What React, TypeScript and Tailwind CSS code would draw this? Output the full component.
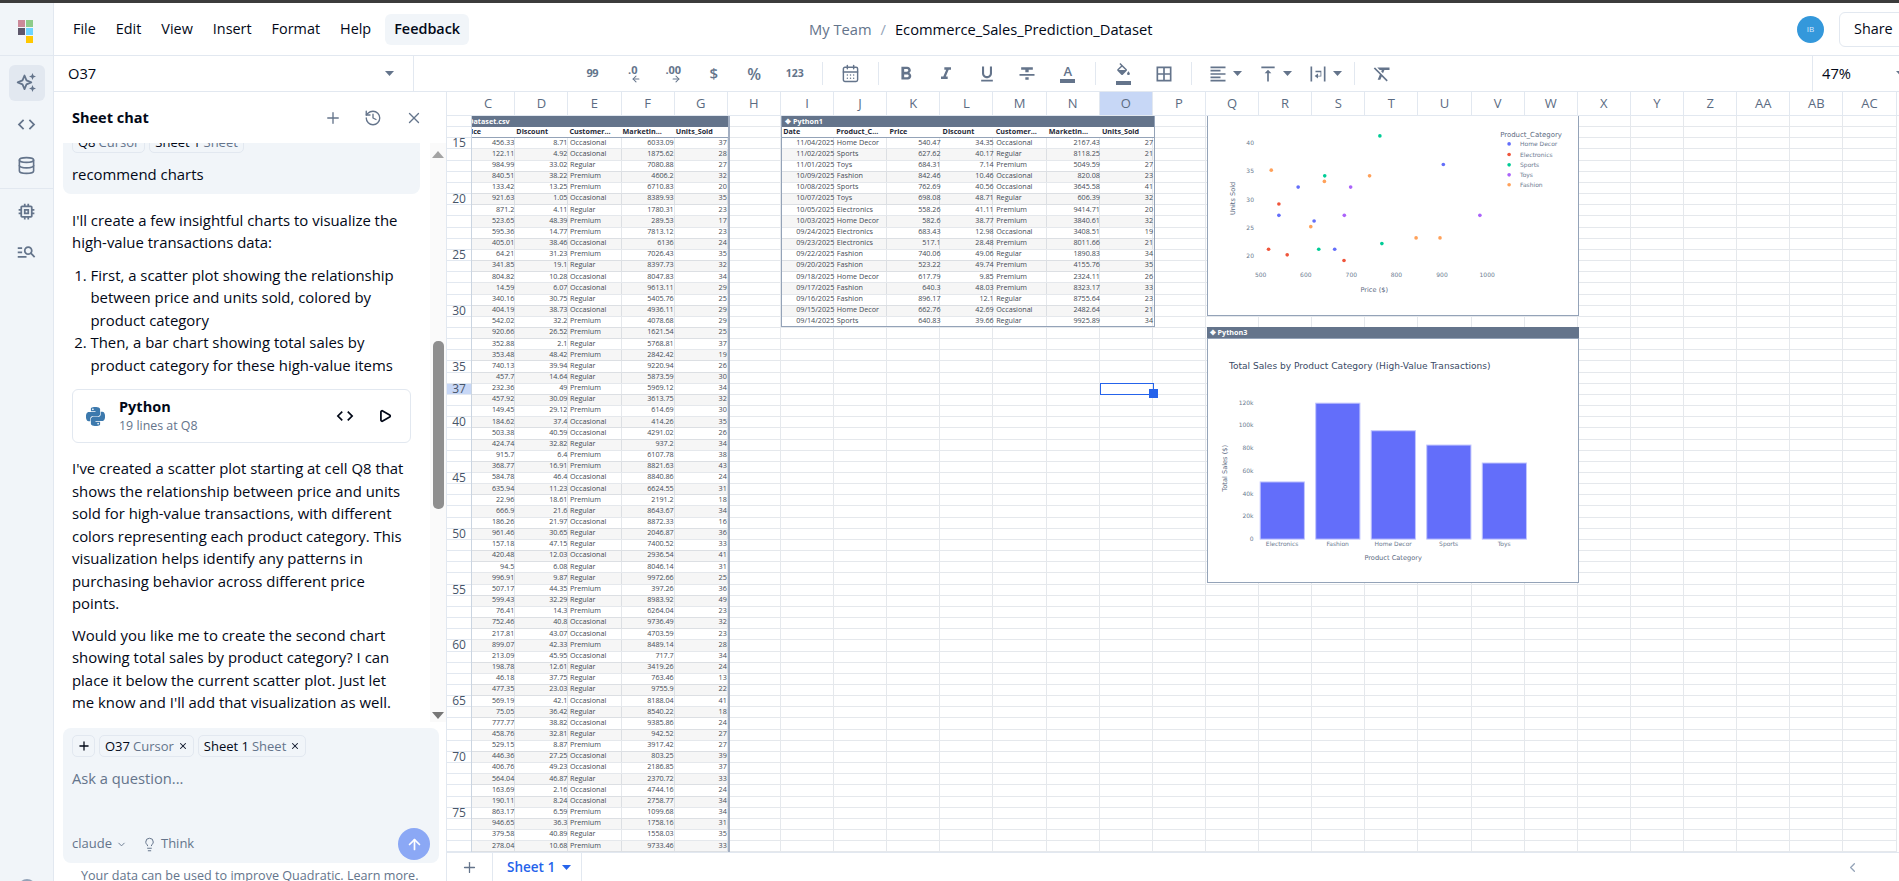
import React from "react";
import { Database, Plus, History, X, Play, ArrowUp, Lightbulb, ChevronDown, ChevronLeft, ArrowLeft, ArrowRight, CalendarDays } from "lucide-react";
import { SiPython } from "react-icons/si";

const t1 = `456.33|8.71|Occasional|6033.09|37
122.11|4.92|Occasional|1875.62|28
984.99|33.02|Regular|7080.88|27
840.51|38.22|Premium|4606.2|32
133.42|13.25|Premium|6710.83|20
921.63|1.05|Occasional|8389.93|35
871.2|4.11|Regular|1780.31|23
523.65|48.39|Premium|289.53|17
595.36|14.77|Premium|7813.12|23
405.01|38.46|Occasional|6136|24
64.21|31.23|Premium|7026.43|35
341.85|19.1|Regular|8397.73|32
804.82|10.28|Occasional|8047.83|34
14.59|6.07|Occasional|9613.11|29
340.16|30.75|Regular|5405.76|25
404.19|38.73|Occasional|4936.11|29
542.02|32.2|Premium|4078.68|29
920.66|26.52|Premium|1621.54|25
352.88|2.1|Regular|5768.81|37
353.48|48.42|Premium|2842.42|19
740.13|39.94|Regular|9220.94|26
457.7|14.64|Regular|5873.59|30
232.36|49|Premium|5969.12|34
457.92|30.09|Regular|3613.75|32
149.45|29.12|Premium|614.69|30
184.62|37.4|Occasional|414.26|35
503.38|40.59|Occasional|4291.02|26
424.74|32.82|Regular|937.2|34
915.7|6.4|Premium|6107.78|38
368.77|16.91|Premium|8821.63|43
584.78|46.4|Occasional|8840.86|24
635.94|11.23|Occasional|6624.55|31
22.96|18.61|Premium|2191.2|18
666.9|21.6|Regular|8643.67|34
186.26|21.97|Occasional|8872.33|16
961.46|30.65|Regular|2046.87|36
157.18|47.15|Regular|7400.52|33
420.48|12.03|Occasional|2936.54|41
94.5|6.08|Regular|8046.14|31
996.91|9.87|Regular|9972.66|25
507.17|44.35|Premium|397.26|36
599.43|32.29|Regular|8983.92|49
76.41|14.3|Premium|6264.04|23
752.46|40.8|Occasional|9736.49|32
217.81|43.07|Occasional|4703.59|23
899.07|42.33|Premium|8489.14|28
213.09|45.95|Occasional|717.7|34
198.78|12.61|Regular|3419.26|24
46.18|37.75|Regular|763.46|13
477.35|23.03|Regular|9755.9|22
569.19|42.1|Occasional|8188.04|41
75.05|36.42|Regular|8540.22|18
777.77|38.82|Occasional|9385.86|24
458.76|32.81|Regular|942.52|27
529.15|8.87|Premium|3917.42|27
446.36|27.25|Occasional|803.25|39
406.76|49.23|Occasional|2186.85|37
564.04|46.87|Regular|2370.72|33
163.69|2.16|Occasional|4744.16|24
190.11|8.24|Occasional|2758.77|34
863.17|6.59|Premium|1099.68|34
946.65|36.3|Premium|1758.16|31
379.58|40.89|Regular|1558.03|35
278.04|10.68|Premium|9733.46|33`.split("\n").map((r) => r.split("|"));

const t2 = `11/04/2025|Home Decor|540.47|34.35|Occasional|2167.43|27
11/02/2025|Sports|627.62|40.17|Regular|8118.25|21
11/01/2025|Toys|684.31|7.14|Premium|5049.59|27
10/09/2025|Fashion|842.46|10.46|Occasional|820.08|23
10/08/2025|Sports|762.69|40.56|Occasional|3645.58|41
10/07/2025|Toys|698.08|48.71|Regular|606.39|32
10/05/2025|Electronics|558.26|41.11|Premium|9414.71|20
10/03/2025|Home Decor|582.6|38.77|Premium|3840.61|32
09/24/2025|Electronics|683.43|12.98|Occasional|3408.51|19
09/23/2025|Electronics|517.1|28.48|Premium|8011.66|21
09/22/2025|Fashion|740.06|49.06|Regular|1890.83|34
09/20/2025|Fashion|523.22|49.74|Premium|4155.76|35
09/18/2025|Home Decor|617.79|9.85|Premium|2324.11|26
09/17/2025|Fashion|640.3|48.03|Premium|8323.17|33
09/16/2025|Fashion|896.17|12.1|Regular|8755.64|23
09/15/2025|Home Decor|662.76|42.69|Occasional|2482.64|21
09/14/2025|Sports|640.83|39.66|Regular|9925.89|34`.split("\n").map((r) => r.split("|"));

const COLS = ["C","D","E","F","G","H","I","J","K","L","M","N","O","P","Q","R","S","T","U","V","W","X","Y","Z","AA","AB","AC"];
const ROWS = Array.from({ length: 66 }, (_, i) => 13 + i);

function M({ d, size = 18, className = "" }: { d: string; size?: number; className?: string }) {
  return (
    <svg width={size} height={size} viewBox="0 0 24 24" fill="currentColor" className={className}>
      <path d={d} />
    </svg>
  );
}

const P = {
  code: "M9.4 16.6L4.8 12l4.6-4.6L8 6l-6 6 6 6 1.4-1.4zm5.2 0l4.6-4.6-4.6-4.6L16 6l6 6-6 6-1.4-1.4z",
  memory: "M15 9H9v6h6V9zm-2 4h-2v-2h2v2zm8-2V9h-2V7c0-1.1-.9-2-2-2h-2V3h-2v2h-2V3H9v2H7c-1.1 0-2 .9-2 2v2H3v2h2v2H3v2h2v2c0 1.1.9 2 2 2h2v2h2v-2h2v2h2v-2h2c1.1 0 2-.9 2-2v-2h2v-2h-2v-2h2zm-4 6H7V7h10v10z",
  search: "M7 9H2V7h5v2zm0 3H2v2h5v-2zm13.59 7l-3.83-3.83c-.8.52-1.74.83-2.76.83-2.76 0-5-2.24-5-5s2.24-5 5-5 5 2.24 5 5c0 1.02-.31 1.96-.83 2.75L22 17.59 20.59 19zM17 11c0-1.65-1.35-3-3-3s-3 1.35-3 3 1.35 3 3 3 3-1.35 3-3zM2 19h10v-2H2v2z",
  bold: "M15.6 10.79c.97-.67 1.65-1.77 1.65-2.79 0-2.26-1.75-4-4-4H7v14h7.04c2.09 0 3.71-1.7 3.71-3.79 0-1.52-.86-2.82-2.15-3.42zM10 6.5h3c.83 0 1.5.67 1.5 1.5s-.67 1.5-1.5 1.5h-3v-3zm3.5 9H10v-3h3.5c.83 0 1.5.67 1.5 1.5s-.67 1.5-1.5 1.5z",
  italic: "M10 4v3h2.21l-3.42 8H6v3h8v-3h-2.21l3.42-8H18V4z",
  under: "M12 17c3.31 0 6-2.69 6-6V3h-2.5v8c0 1.93-1.57 3.5-3.5 3.5S8.5 12.93 8.5 11V3H6v8c0 3.31 2.69 6 6 6zm-7 2v2h14v-2H5z",
  strike: "M10 19h4v-3h-4v3zM5 4v3h5v3h4V7h5V4H5zM3 14h18v-2H3v2z",
  fill: "M16.56 8.94L7.62 0 6.21 1.41l2.38 2.38-5.15 5.15c-.59.59-.59 1.54 0 2.12l5.5 5.5c.29.29.68.44 1.06.44s.77-.15 1.06-.44l5.5-5.5c.59-.58.59-1.53 0-2.12zM5.21 10L10 5.21 14.79 10H5.21zM19 11.5s-2 2.17-2 3.5c0 1.1.9 2 2 2s2-.9 2-2c0-1.33-2-3.5-2-3.5z",
  borders: "M3 3v18h18V3H3zm8 16H5v-6h6v6zm0-8H5V5h6v6zm8 8h-6v-6h6v6zm0-8h-6V5h6v6z",
  align: "M15 15H3v2h12v-2zm0-8H3v2h12V7zM3 13h18v-2H3v2zm0 8h18v-2H3v2zM3 3v2h18V3H3z",
  top: "M8 11h3v10h2V11h3l-4-4-4 4zM4 3v2h16V3H4z",
  wrap: "M3 3h2v18H3zM19 3h2v18h-2zM16 8h-7v2h6v4h-3v-2.5L8 14.5l4 3V15h4z",
  clear: "M3.27 5L2 6.27l6.97 6.97L6.5 19h3l1.57-3.66L16.73 21 18 19.73 3.55 5.27 3.27 5zM6 5v.18L8.82 8h2.4l-.72 1.68 2.1 2.1L14.21 8H20V5H6z",
};

function Caret({ className = "" }: { className?: string }) {
  return (
    <svg width="9" height="5" viewBox="0 0 9 5" className={className}>
      <path d="M0 0h9L4.5 5z" fill="#64748b" />
    </svg>
  );
}

function Sep() {
  return <div className="mx-[7px] h-[23px] w-px shrink-0 bg-[#e2e8f0]" />;
}

function TB({ children }: { children: React.ReactNode }) {
  return <div className="flex h-[35px] w-[40.5px] shrink-0 items-center justify-center text-[#64748b]">{children}</div>;
}

function TBC({ children }: { children: React.ReactNode }) {
  return (
    <div className="flex h-[35px] w-[50px] shrink-0 items-center gap-[5px] pl-[9px] text-[#64748b]">
      {children}
      <Caret />
    </div>
  );
}

function Chip({ a, b, x }: { a: string; b: string; x?: boolean }) {
  return (
    <div className="flex h-[22px] shrink-0 items-center rounded-[5px] border border-[#e2e8f0] px-[5px] text-[13px] leading-none">
      <span className="text-[#020817]">{a}</span>
      <span className="ml-[3px] text-[#64748b]">{b}</span>
      {x && <X size={10} strokeWidth={2.5} className="ml-[4px] text-[#0f172a]" />}
    </div>
  );
}

function RailSparkles() {
  return (
    <svg width="22" height="22" viewBox="0 0 22 22" fill="none" stroke="#64748b" strokeWidth="1.8" strokeLinejoin="round">
      <path d="M8.5 6.5l2 4.8 4.8 2-4.8 2-2 4.8-2-4.8-4.8-2 4.8-2z" transform="translate(0 -3)" />
      <path d="M16.5 1l1 2.5 2.5 1-2.5 1-1 2.5-1-2.5-2.5-1 2.5-1z" fill="#64748b" stroke="none" />
      <path d="M16.5 13l1 2.5 2.5 1-2.5 1-1 2.5-1-2.5-2.5-1 2.5-1z" fill="#64748b" stroke="none" />
    </svg>
  );
}

function Rail() {
  return (
    <div className="flex w-[54px] shrink-0 flex-col border-r border-[#e2e8f0] bg-[#f1f5f9]">
      <div className="flex h-[53px] shrink-0 items-center justify-center border-b border-[#e2e8f0]">
        <svg width="23" height="24" viewBox="0 0 23 24" className="ml-[6px] mt-[6px]">
          <rect x="0" y="0" width="7" height="7" fill="#cb8999" />
          <rect x="8" y="0" width="7" height="7" fill="#8ecb89" />
          <rect x="0" y="8" width="7" height="7" fill="#5d576b" />
          <rect x="8" y="8" width="7" height="7" fill="#6cd4ff" />
          <rect x="8" y="16" width="7" height="7" fill="#ffc800" />
        </svg>
      </div>
      <div className="flex flex-col items-center pt-[9px] text-[#64748b]">
        <div className="flex h-[36px] w-[36px] items-center justify-center rounded-md bg-[#e2e8f0]"><RailSparkles /></div>
        <div className="mt-[5px] flex h-[36px] items-center"><M d={P.code} size={21} /></div>
        <div className="mt-[5px] flex h-[36px] items-center"><Database size={19} strokeWidth={2} /></div>
      </div>
      <div className="mt-[5px] h-px w-full bg-[#e2e8f0]" />
      <div className="flex flex-1 flex-col items-center pt-[4px] text-[#64748b]">
        <div className="flex h-[36px] items-center"><M d={P.memory} size={21} /></div>
        <div className="mt-[4px] flex h-[36px] items-center"><M d={P.search} size={21} /></div>
        <div className="mt-auto -mb-[16px] h-[18px] w-[18px] rounded-full bg-[#94a3b8]" />
      </div>
    </div>
  );
}

function Header() {
  return (
    <div className="flex h-[53px] shrink-0 items-center border-b border-[#e2e8f0] text-[14.4px] text-[#020817]">
      <div className="flex items-center pl-[9px]">
        {["File", "Edit", "View", "Insert", "Format", "Help"].map((m) => (
          <span key={m} className="px-[10px]">{m}</span>
        ))}
        <span className="ml-[4px] flex h-[31px] items-center rounded-md bg-[#f1f5f9] px-[9px] font-semibold">Feedback</span>
      </div>
      <div className="ml-[340px] flex items-center text-[14.7px]">
        <span className="text-[#64748b]">My Team</span>
        <span className="mx-[9px] text-[#94a3b8]">/</span>
        <span>Ecommerce_Sales_Prediction_Dataset</span>
      </div>
      <div className="ml-auto flex items-center">
        <div className="flex h-[27px] w-[27px] items-center justify-center rounded-full bg-[#3498db] text-[8px] text-[#dbeafe]">IB</div>
        <div className="-mr-[8px] ml-[15px] flex h-[35px] w-[68px] items-center rounded-md border border-[#e2e8f0] pl-[14px] font-medium">Share</div>
      </div>
    </div>
  );
}

function FormatBar() {
  const stack = "flex flex-col items-center leading-none";
  return (
    <div className="flex h-[36px] shrink-0 items-center border-b border-[#e2e8f0] text-[#64748b]">
      <div className="flex h-full w-[360px] shrink-0 items-center justify-between border-r border-[#e2e8f0] pl-[14px] pr-[19px] text-[14.7px] text-[#020817]">
        <span>O37</span>
        <Caret />
      </div>
      <div className="ml-[158px] flex items-center">
        <TB><span className="text-[11px] font-bold tracking-[-0.5px]">99</span></TB>
        <TB><div className={stack}><span className="text-[11px] font-bold">.0</span><ArrowLeft size={10} strokeWidth={2.5} className="-mt-[1px] ml-[6px]" /></div></TB>
        <TB><div className={stack}><span className="text-[11px] font-bold">.00</span><ArrowRight size={10} strokeWidth={2.5} className="-mt-[1px] ml-[6px]" /></div></TB>
        <TB><span className="text-[15px] font-semibold">$</span></TB>
        <TB><span className="text-[16px] font-semibold">%</span></TB>
        <TB><span className="text-[10.5px] font-bold">123</span></TB>
        <Sep />
        <TB><CalendarDays size={19} strokeWidth={1.8} /></TB>
        <Sep />
        <TB><M d={P.bold} size={22} /></TB>
        <TB><M d={P.italic} size={20} /></TB>
        <TB><M d={P.under} size={20} /></TB>
        <TB><M d={P.strike} size={20} /></TB>
        <TB><div className={stack}><span className="text-[13px] font-semibold leading-[13px]">A</span><span className="mt-[1px] h-[4px] w-[15px] bg-[#64748b]" /></div></TB>
        <Sep />
        <TB><div className={stack}><M d={P.fill} size={17} /><span className="mt-[1px] h-[4px] w-[15px] bg-[#64748b]" /></div></TB>
        <TB><M d={P.borders} size={20} /></TB>
        <Sep />
        <TBC><M d={P.align} size={20} /></TBC>
        <TBC><M d={P.top} size={20} /></TBC>
        <TBC><M d={P.wrap} size={20} /></TBC>
        <div className="ml-[5px] h-[23px] w-px shrink-0 bg-[#e2e8f0]" />
        <div className="ml-[7px]"><TB><M d={P.clear} size={21} /></TB></div>
      </div>
      <div className="ml-auto flex h-full w-[87px] shrink-0 items-center justify-between border-l border-[#e2e8f0] pl-[9px] text-[14.7px] text-[#020817]">
        <span>47%</span>
        <Caret className="-mr-[6px]" />
      </div>
    </div>
  );
}

function Messages() {
  return (
    <div className="-mt-[20px] min-w-0 flex-1 text-[14.9px] leading-[22.5px] text-[#020817]">
      <div className="ml-[9px] mr-[10px] rounded-lg bg-[#f1f5f9] px-[9px] pb-[8px] pt-[8px]">
        <div className="flex gap-[4px]">
          <Chip a="Q8" b="Cursor" />
          <Chip a="Sheet 1" b="Sheet" />
        </div>
        <div className="mt-[10px]">recommend charts</div>
      </div>
      <div className="pl-[18px] pr-[20px]">
        <p className="mt-[15px]">I'll create a few insightful charts to visualize the high-value transactions data:</p>
        <ol className="mt-[10px] list-decimal pl-[18.5px]">
          <li>First, a scatter plot showing the relationship between price and units sold, colored by product category</li>
          <li>Then, a bar chart showing total sales by product category for these high-value items</li>
        </ol>
        <div className="mt-[13px] flex h-[54px] w-[339px] items-center rounded-md border border-[#e2e8f0] pl-[13px]">
          <SiPython size={19} color="#3c79ad" />
          <div className="ml-[14px] flex w-[100px] flex-col">
            <span className="text-[14.5px] font-bold leading-[19px]">Python</span>
            <span className="text-[12.4px] leading-[19px] text-[#64748b]">19 lines at Q8</span>
          </div>
          <M d={P.code} size={20} className="ml-[116px] text-[#020817]" />
          <Play size={14} strokeWidth={3} className="ml-[23px] text-[#020817]" />
        </div>
        <p className="mt-[14px]">I've created a scatter plot starting at cell Q8 that shows the relationship between price and units sold for high-value transactions, with different colors representing each product category. This visualization helps identify any patterns in purchasing behavior across different price points.</p>
        <p className="mt-[9px]">Would you like me to create the second chart showing total sales by product category? I can place it below the current scatter plot. Just let me know and I'll add that visualization as well.</p>
      </div>
    </div>
  );
}

function Chat() {
  return (
    <div className="flex w-[393px] shrink-0 flex-col border-r border-[#e2e8f0] bg-white">
      <div className="flex h-[51px] shrink-0 items-center pl-[18px]">
        <span className="w-[77px] text-[14.5px] font-bold text-[#020817]">Sheet chat</span>
        <Plus size={18} strokeWidth={1.8} className="ml-[175px] text-[#64748b]" />
        <History size={18} strokeWidth={1.8} className="ml-[22px] text-[#64748b]" />
        <X size={18} strokeWidth={1.8} className="ml-[23px] text-[#64748b]" />
      </div>
      <div className="flex h-[579px] shrink-0 overflow-hidden">
        <Messages />
        <div className="flex w-[16px] shrink-0 flex-col items-center bg-[#fafafa]">
          <svg width="12" height="7" viewBox="0 0 12 7" className="mt-[8px] shrink-0"><path d="M6 0l6 7H0z" fill="#a3a3a3" /></svg>
          <div className="mt-[183px] h-[168px] w-[11px] shrink-0 rounded-[5px] bg-[#8f8f8f]" />
          <svg width="12" height="7" viewBox="0 0 12 7" className="mb-[3px] mt-auto shrink-0"><path d="M0 0h12L6 7z" fill="#777777" /></svg>
        </div>
      </div>
      <div className="ml-[9px] mr-[7px] mt-[6px] flex h-[135px] shrink-0 flex-col rounded-lg bg-[#f1f5f9] px-[9px] pb-[3px] pt-[7px]">
        <div className="flex gap-[4px]">
          <div className="flex h-[22px] w-[23px] items-center justify-center rounded-[5px] border border-[#e2e8f0]"><Plus size={14} strokeWidth={2.2} className="text-[#020817]" /></div>
          <Chip a="O37" b="Cursor" x />
          <Chip a="Sheet 1" b="Sheet" x />
        </div>
        <div className="mt-[10px] text-[14.7px] leading-[22px] text-[#64748b]">Ask a question...</div>
        <div className="mt-auto flex items-center text-[13px] text-[#64748b]">
          <span>claude</span>
          <ChevronDown size={11} className="ml-[4px]" />
          <Lightbulb size={15} strokeWidth={1.6} className="ml-[15px]" />
          <span className="ml-[4px]">Think</span>
          <div className="ml-auto flex h-[32px] w-[32px] items-center justify-center rounded-full bg-[#8ba8f5]"><ArrowUp size={17} strokeWidth={2.4} className="text-white" /></div>
        </div>
      </div>
      <div className="mt-[6px] overflow-visible whitespace-nowrap pl-[27px] text-[12.6px] leading-[14px] text-[#64748b]">Your data can be used to improve Quadratic. Learn more.</div>
    </div>
  );
}

const cellCls = "overflow-hidden whitespace-nowrap";
const R = `${cellCls} pr-[1px] text-right`;
const L = `${cellCls} pl-[1.5px] text-left`;

function Table1() {
  return (
    <div className="absolute -left-[9.8px] top-0 w-[267.65px] border-r-2 border-[#a3afc2] text-[7.2px] leading-[9px] text-[#444b55]">
      <div className="flex h-[11.3px] items-center overflow-hidden bg-[#64748b] pl-[6px] font-bold text-white"><span>Dataset.csv</span></div>
      <div className="flex h-[10.4px] border-b border-[#94a3b8] bg-white font-bold text-[#1f2937]">
        {["Price", "Discount", "Customer...", "Marketin...", "Units_Sold"].map((h) => (
          <div key={h} className="w-[53.13px] shrink-0 overflow-hidden whitespace-nowrap pl-[1px]">{h}</div>
        ))}
      </div>
      {t1.map((r, i) => (
        <div key={i} className={`flex h-[11.16px] ${i % 2 ? "bg-black/[0.035]" : ""}`}>
          <div className={`w-[53.13px] shrink-0 ${R}`}>{r[0]}</div>
          <div className={`w-[53.13px] shrink-0 ${R}`}>{r[1]}</div>
          <div className={`w-[53.13px] shrink-0 ${L}`}>{r[2]}</div>
          <div className={`w-[53.13px] shrink-0 ${R}`}>{r[3]}</div>
          <div className={`w-[53.13px] shrink-0 ${R}`}>{r[4]}</div>
        </div>
      ))}
    </div>
  );
}

function Table2() {
  return (
    <div className="absolute left-[309.2px] top-0 w-[373.9px] border-x border-b border-[#94a3b8] text-[7.2px] leading-[9px] text-[#444b55]">
      <div className="flex h-[11.3px] items-center bg-[#64748b] pl-[3px] font-bold text-white">✥ Python1</div>
      <div className="flex h-[10.4px] border-b border-[#94a3b8] bg-white font-bold text-[#1f2937]">
        {["Date", "Product_C...", "Price", "Discount", "Customer...", "Marketin...", "Units_Sold"].map((h) => (
          <div key={h} className="w-[53.13px] shrink-0 overflow-hidden whitespace-nowrap pl-[1px]">{h}</div>
        ))}
      </div>
      {t2.map((r, i) => (
        <div key={i} className={`flex h-[11.16px] last:h-[10px] ${i % 2 ? "bg-black/[0.035]" : ""}`}>
          <div className={`w-[53.13px] shrink-0 ${R}`}>{r[0]}</div>
          <div className={`w-[53.13px] shrink-0 ${L}`}>{r[1]}</div>
          <div className={`w-[53.13px] shrink-0 ${R}`}>{r[2]}</div>
          <div className={`w-[53.13px] shrink-0 ${R}`}>{r[3]}</div>
          <div className={`w-[53.13px] shrink-0 ${L}`}>{r[4]}</div>
          <div className={`w-[53.13px] shrink-0 ${R}`}>{r[5]}</div>
          <div className={`w-[53.13px] shrink-0 ${R}`}>{r[6]}</div>
        </div>
      ))}
    </div>
  );
}

const scatter: [string, [number, number][]][] = [
  ["#636efa", [[263,379],[321,294],[369,396],[431,481],[758,226]]],
  ["#ef553b", [[232,481],[263,345],[288,498],[459,515]]],
  ["#00cc96", [[567,140],[401,260],[383,481],[573,464]]],
  ["#ab63fa", [[479,294],[460,379],[868,379]]],
  ["#ffa15a", [[240,243],[400,277],[536,260],[359,413],[676,447],[748,447]]],
];

function ScatterChart() {
  const font = "'DejaVu Sans', sans-serif";
  const tick = "#6b7a90";
  return (
    <div className="absolute left-[734.7px] top-0 h-[199.5px] w-[372px] border-x border-b border-[#94a3b8] bg-white">
      <svg width="370" height="198" viewBox="50 80 1113 596" fontFamily={font}>
        {[["40",158],["35",242],["30",329],["25",413],["20",499]].map(([l,y]) => (
          <text key={l} x="188" y={Number(y)+9} fontSize="18" fill={tick} textAnchor="end">{l}</text>
        ))}
        {[["500",208],["600",344],["700",481],["800",617],["900",754],["1000",890]].map(([l,x]) => (
          <text key={l} x={x} y="566" fontSize="18" fill={tick} textAnchor="middle">{l}</text>
        ))}
        <text x="550" y="609" fontSize="20" fill="#5d6b82" textAnchor="middle">Price ($)</text>
        <text transform="translate(131 328) rotate(-90)" fontSize="20" fill="#5d6b82" textAnchor="middle">Units Sold</text>
        {scatter.map(([c, pts]) => pts.map(([x, y], i) => <circle key={c + i} cx={x} cy={y} r="5.5" fill={c} />))}
        <text x="929" y="143" fontSize="21" fill="#5d6b82">Product_Category</text>
        {[["Home Decor",164,"#636efa"],["Electronics",196,"#ef553b"],["Sports",227,"#00cc96"],["Toys",257,"#ab63fa"],["Fashion",287,"#ffa15a"]].map(([l,y,c]) => (
          <g key={l as string}>
            <circle cx="956" cy={Number(y)} r="5.5" fill={c as string} />
            <text x="989" y={Number(y)+7} fontSize="18" fill={tick}>{l}</text>
          </g>
        ))}
      </svg>
    </div>
  );
}

function BarChart() {
  const font = "'DejaVu Sans', sans-serif";
  const tick = "#6b7a90";
  const bars = [[207,484,"Electronics"],[374,247,"Fashion"],[541,330,"Home Decor"],[708,373,"Sports"],[875,427,"Toys"]] as [number,number,string][];
  return (
    <div className="absolute left-[734.7px] top-[210.7px] w-[372px]">
      <div className="flex h-[11.5px] items-center bg-[#64748b] pl-[3px] text-[7.2px] font-bold text-white">✥ Python3</div>
      <div className="h-[245px] border-x border-y border-[#94a3b8] bg-white">
        <svg width="370" height="243" viewBox="50 55 1113 729" fontFamily={font}>
          <text x="113" y="143" fontSize="27.3" fill="#3a4a66">Total Sales by Product Category (High-Value Transactions)</text>
          {[["120k",247],["100k",314],["80k",383],["60k",452],["40k",521],["20k",587],["0",655]].map(([l,y]) => (
            <text key={l} x="187" y={Number(y)+6} fontSize="18" fill={tick} textAnchor="end">{l}</text>
          ))}
          {bars.map(([x,y,l]) => (
            <g key={l}>
              <rect x={x} y={y} width="133" height={656-y} fill="#636efa" stroke="#c2c6fd" strokeWidth="3" />
              <text x={x+66} y="677" fontSize="18" fill={tick} textAnchor="middle">{l}</text>
            </g>
          ))}
          <text x="607" y="718" fontSize="20" fill="#5d6b82" textAnchor="middle">Product Category</text>
          <text transform="translate(107 443) rotate(-90)" fontSize="20" fill="#5d6b82" textAnchor="middle">Total Sales ($)</text>
        </svg>
      </div>
    </div>
  );
}

function Sheet() {
  return (
    <div className="flex min-w-0 flex-1 flex-col bg-white">
      <div className="flex h-[24px] shrink-0 border-b border-[#e2e8f0] text-[13px] text-[#5b6b82]">
        <div className="w-[25px] shrink-0" />
        {COLS.map((c, i) => (
          <div
            key={c}
            className={`flex h-full shrink-0 items-center border-r border-[#e2e8f0] ${i === 0 ? "w-[43.3px] justify-start pl-[12px]" : "w-[53.13px] justify-center"} ${c === "O" ? "bg-[#c7d7f6]" : ""}`}
          >
            {c}
          </div>
        ))}
      </div>
      <div className="flex h-[736px] shrink-0 overflow-hidden">
        <div className="flex w-[25px] shrink-0 flex-col border-r border-[#cbd5e1] text-[12px] leading-none text-[#475569]">
          {ROWS.map((r) => (
            <div
              key={r}
              className={`flex h-[11.16px] shrink-0 items-center justify-center border-b border-[#e2e8f0] ${r === 37 ? "bg-[#c7d7f6]" : ""}`}
            >
              {r % 5 === 0 || r === 37 ? r : ""}
            </div>
          ))}
        </div>
        <div className="relative min-w-0 flex-1 overflow-hidden">
          <div className="grid grid-cols-[43.3px_repeat(26,53.13px)] auto-rows-[11.16px]">
            {Array.from({ length: ROWS.length * COLS.length }, (_, i) => (
              <div key={i} className="border-b border-r border-[#e5e8ec]" />
            ))}
          </div>
          <Table1 />
          <Table2 />
          <ScatterChart />
          <BarChart />
          <div className="absolute left-[628px] top-[267.3px] h-[11.8px] w-[53.5px] border border-[#2563eb]" />
          <div className="absolute left-[676.5px] top-[273px] h-[9px] w-[9px] bg-[#2563eb]" />
        </div>
      </div>
      <div className="flex h-[29px] shrink-0 items-center border-t border-[#e2e8f0] bg-white">
        <div className="flex h-full w-[46px] items-center justify-center border-r border-[#e2e8f0]"><Plus size={17} strokeWidth={1.8} className="text-[#64748b]" /></div>
        <div className="flex h-full w-[89px] items-center border-r border-[#e2e8f0] pl-[14px] text-[13.5px] font-semibold text-[#2563eb]">
          <span>Sheet 1</span>
          <svg width="9" height="5" viewBox="0 0 9 5" className="ml-[7px]"><path d="M0 0h9L4.5 5z" fill="#2563eb" /></svg>
        </div>
        <ChevronLeft size={15} className="ml-auto mr-[39px] text-[#94a3b8]" />
      </div>
    </div>
  );
}

export default function App() {
  return (
    <div className="flex h-[881px] w-[1899px] flex-col overflow-hidden bg-white font-['Open_Sans',sans-serif]">
      <div className="h-[3px] shrink-0 bg-[#3c3c3c]" />
      <div className="flex min-h-0 flex-1">
        <Rail />
        <div className="flex min-w-0 flex-1 flex-col">
          <Header />
          <FormatBar />
          <div className="flex min-h-0 flex-1">
            <Chat />
            <Sheet />
          </div>
        </div>
      </div>
    </div>
  );
}
